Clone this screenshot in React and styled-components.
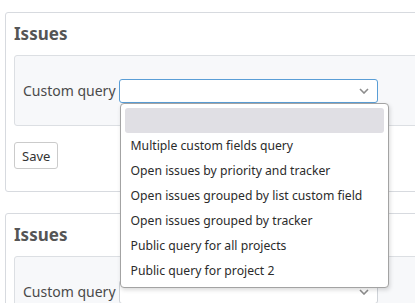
import React from 'react'
import styled, { createGlobalStyle } from 'styled-components'

const GlobalStyle = createGlobalStyle`
  html, body {
    margin: 0;
    padding: 0;
    background: #fff;
    overflow: hidden;
  }
  body {
    font-family: "Noto Sans", "Open Sans", sans-serif;
    color: #484848;
  }
`

const Page = styled.div`
  padding: 12px 0 0 5px;
  display: flex;
  flex-direction: column;
  gap: 21px;
`

const Box = styled.div`
  width: 440px;
  border: 1px solid #d7dadf;
  border-radius: 3px;
  background: #fff;
  padding: 10px 8px 22px 8px;
  box-sizing: border-box;
`

const Heading = styled.h3`
  margin: 0 0 10px 0;
  font-size: 17px;
  line-height: 22px;
  font-weight: 700;
  color: #555;
`

const Tabular = styled.div`
  border: 1px solid #dcdfe3;
  border-radius: 3px;
  background: #f7f8fa;
  padding: 23px 8px 22px 8px;
  display: flex;
  align-items: center;
  gap: 3px;
`

const Label = styled.label`
  font-size: 14px;
  line-height: 20px;
  color: #4a4a4a;
`

const SelectWrap = styled.div`
  position: relative;
`

const SelectBox = styled.div`
  width: 259px;
  height: 24px;
  box-sizing: border-box;
  border: 1px solid ${p => (p.$focused ? '#5a9ed6' : '#cfd3d8')};
  border-radius: 3px;
  background: #fff;
  display: flex;
  align-items: center;
  justify-content: flex-end;
  padding-right: 8px;
`

const Chevron = () => (
  <svg width="10" height="6" viewBox="0 0 10 6">
    <path d="M1 1 L5 5 L9 1" fill="none" stroke="#8c8c8c" strokeWidth="1.6" />
  </svg>
)

const Options = styled.ul`
  position: absolute;
  top: 24px;
  left: 1px;
  width: 269px;
  box-sizing: border-box;
  margin: 0;
  padding: 4px;
  list-style: none;
  background: #fff;
  border: 1px solid #a3a3a3;
  border-radius: 4px;
  box-shadow: 1px 2px 4px rgba(0, 0, 0, 0.15);
  z-index: 5;
`

const Option = styled.li`
  height: 25px;
  line-height: 25px;
  padding: 0 6px;
  font-size: 12.2px;
  color: #2b2b2b;
  border-radius: 3px;
  background: ${p => (p.$active ? '#e0dfe4' : 'transparent')};
  white-space: nowrap;
`

const Actions = styled.div`
  margin-top: 16px;
`

const Button = styled.button`
  height: 27px;
  padding: 0 7px;
  font-family: "Noto Sans", "Open Sans", sans-serif;
  font-size: 13px;
  color: #333;
  background: #fff;
  border: 1px solid #cbcbcb;
  border-radius: 3px;
  cursor: pointer;
`

const queries = [
  '',
  'Multiple custom fields query',
  'Open issues by priority and tracker',
  'Open issues grouped by list custom field',
  'Open issues grouped by tracker',
  'Public query for all projects',
  'Public query for project 2',
]

const IssuesBox = ({ open }) => (
  <Box>
    <Heading>Issues</Heading>
    <Tabular>
      <Label>Custom query</Label>
      <SelectWrap>
        <SelectBox $focused={open}>
          <Chevron />
        </SelectBox>
        {open && (
          <Options>
            {queries.map((q, i) => (
              <Option key={i} $active={i === 0}>{q}</Option>
            ))}
          </Options>
        )}
      </SelectWrap>
    </Tabular>
    <Actions>
      <Button>Save</Button>
    </Actions>
  </Box>
)

export default function App() {
  return (
    <>
      <GlobalStyle />
      <Page>
        <IssuesBox open />
        <IssuesBox />
      </Page>
    </>
  )
}
